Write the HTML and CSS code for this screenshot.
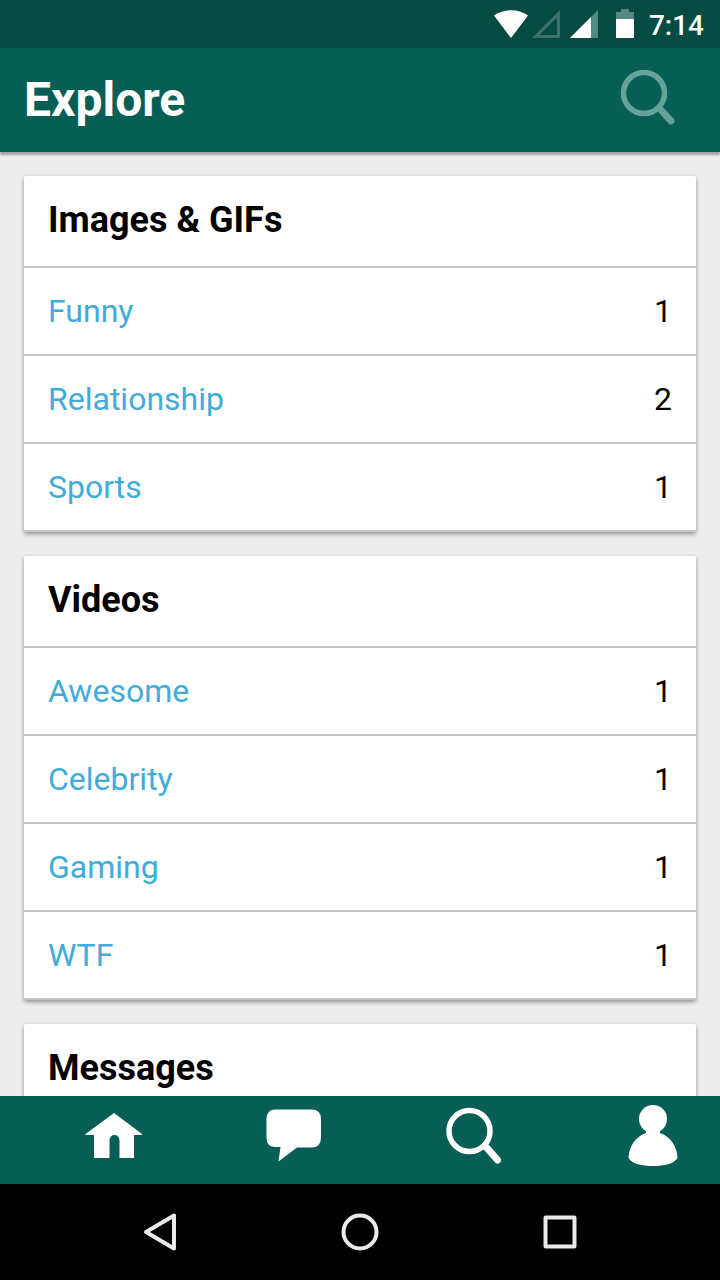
FILE: index.html
```html
<!DOCTYPE html>
<html lang="en">
<head>
<meta charset="utf-8">
<meta name="viewport" content="width=device-width, initial-scale=1">
<title>Explore</title>
<link rel="stylesheet" href="styles.css">
</head>
<body>
<div class="screen">
  <div class="status-bar">
    <svg class="status-icons" width="144" height="32" viewBox="0 0 144 32" aria-hidden="true">
      <path fill="#fff" d="M0 7.500C10 0.500 24 0.500 34 7.500L17 30Z"/>
      <path fill="#397269" fill-rule="evenodd" d="M66 2V30H38ZM63 9.500L45.500 27H63Z"/>
      <path fill="#558880" d="M104 2V30H76Z"/>
      <path fill="#fff" d="M97 9V30H76Z"/>
      <path fill="#558880" d="M122 4H127V1H135V4H140V11H122Z"/>
      <path fill="#fff" d="M122 11H140V30H122Z"/>
    </svg>
    <time class="clock">7:14</time>
  </div>

  <header class="app-bar">
    <h1 class="app-title">Explore</h1>
    <button class="icon-button search-button" type="button" aria-label="Search">
      <svg width="60" height="60" viewBox="0 0 60 60" fill="none" stroke="currentColor" aria-hidden="true">
        <circle cx="26" cy="23" r="20.500" stroke-width="5.500"/>
        <path stroke-width="5" d="M39.500 37L44 41.500"/>
        <path stroke-width="7" stroke-linecap="round" d="M44 41L53 51"/>
      </svg>
    </button>
  </header>

  <main class="content">
    <section class="card">
      <h2 class="card-title">Images &amp; GIFs</h2>
      <ul class="topics">
        <li><a class="topic" href="#funny"><span>Funny</span><span class="count">1</span></a></li>
        <li><a class="topic" href="#relationship"><span>Relationship</span><span class="count">2</span></a></li>
        <li><a class="topic" href="#sports"><span>Sports</span><span class="count">1</span></a></li>
      </ul>
    </section>
    <section class="card">
      <h2 class="card-title">Videos</h2>
      <ul class="topics">
        <li><a class="topic" href="#awesome"><span>Awesome</span><span class="count">1</span></a></li>
        <li><a class="topic" href="#celebrity"><span>Celebrity</span><span class="count">1</span></a></li>
        <li><a class="topic" href="#gaming"><span>Gaming</span><span class="count">1</span></a></li>
        <li><a class="topic" href="#wtf"><span>WTF</span><span class="count">1</span></a></li>
      </ul>
    </section>
    <section class="card">
      <h2 class="card-title">Messages</h2>
    </section>
  </main>

  <nav class="tab-bar" aria-label="Sections">
    <button class="icon-button tab" type="button" aria-label="Home">
      <svg width="64" height="64" viewBox="0 0 64 64" fill="currentColor" aria-hidden="true">
        <path d="M32 9L60 30V31H52V54H37.500V36.500Q37 31 32.500 31Q28 31 27.500 36.500V54H12V31H3.500V30Z"/>
      </svg>
    </button>
    <button class="icon-button tab" type="button" aria-label="Messages">
      <svg width="64" height="64" viewBox="0 0 64 64" fill="currentColor" aria-hidden="true">
        <path d="M13.500 5.500H49.500Q59 5.500 59 15V33.500Q59 43.500 49.500 43.500H35L16.500 57.500L18.500 43H13.500Q4.500 43 4.500 33.500V15Q4.500 5.500 13.500 5.500Z"/>
      </svg>
    </button>
    <button class="icon-button tab" type="button" aria-label="Explore" aria-current="page">
      <svg width="64" height="64" viewBox="0 0 64 64" fill="none" stroke="currentColor" aria-hidden="true">
        <circle cx="27.500" cy="27" r="20.500" stroke-width="5.500"/>
        <path stroke-width="5" d="M41 41L46 46"/>
        <path stroke-width="7" stroke-linecap="round" d="M45 44L55.500 56"/>
      </svg>
    </button>
    <button class="icon-button tab" type="button" aria-label="Profile">
      <svg width="64" height="64" viewBox="0 0 64 64" fill="currentColor" aria-hidden="true">
        <circle cx="31" cy="15" r="14"/>
        <path d="M24 26H38L38 29C48 32 55.500 43 55.500 54C52 60 42 62 31 62C20 62 10 60 6.500 54C6.500 43 14 32 24 29Z"/>
      </svg>
    </button>
  </nav>

  <nav class="system-bar" aria-label="System">
    <button class="icon-button system-key" type="button" aria-label="Back">
      <svg width="40" height="40" viewBox="0 0 40 40" fill="none" stroke="currentColor" stroke-width="4" stroke-linejoin="round" aria-hidden="true"><path d="M34 3.500V36.500L6 20Z"/></svg>
    </button>
    <button class="icon-button system-key" type="button" aria-label="Home">
      <svg width="40" height="40" viewBox="0 0 40 40" fill="none" stroke="currentColor" stroke-width="4" aria-hidden="true"><circle cx="20" cy="20" r="16.500"/></svg>
    </button>
    <button class="icon-button system-key" type="button" aria-label="Recent apps">
      <svg width="40" height="40" viewBox="0 0 40 40" fill="none" stroke="currentColor" stroke-width="4" stroke-linejoin="round" aria-hidden="true"><path d="M5.500 5.500H34.500V34.500H5.500Z"/></svg>
    </button>
  </nav>
</div>
</body>
</html>
```
FILE: styles.css
```css
* {
  box-sizing: border-box;
}

body {
  margin: 0;
  font-family: Roboto, "Liberation Sans", sans-serif;
  color: #000;
  background: #ededed;
}

.screen {
  display: flex;
  flex-direction: column;
  height: 100vh;
}

.status-bar {
  display: flex;
  flex: none;
  align-items: center;
  justify-content: flex-end;
  gap: 11px;
  height: 48px;
  padding-right: 16px;
  background: #054b42;
  color: #fff;
}

.clock {
  padding-top: 4px;
  font-size: 28px;
  font-weight: 500;
  line-height: 44px;
}

.app-bar {
  z-index: 1;
  display: flex;
  flex: none;
  align-items: center;
  justify-content: space-between;
  height: 104px;
  padding: 0 42px 0 24px;
  background: #075e54;
  color: #fff;
  box-shadow: 0 3px 2px rgba(0, 0, 0, 0.3);
}

.app-title {
  margin: 0;
  font-size: 48px;
  font-weight: 700;
  line-height: 56px;
}

.icon-button {
  display: flex;
  align-items: center;
  justify-content: center;
  margin: 0;
  padding: 0;
  border: 0;
  background: none;
  color: inherit;
}

.search-button {
  color: #65a29a;
}

.content {
  display: flex;
  flex: 1;
  flex-direction: column;
  gap: 24px;
  min-height: 0;
  padding: 24px;
  overflow-y: auto;
  scrollbar-width: none;
}

.card {
  flex: none;
  border-radius: 2px;
  background: #fff;
  box-shadow: 0 2px 4px rgba(0, 0, 0, 0.4);
}

.card-title {
  margin: 0;
  padding: 23px 24px 25px;
  border-bottom: 2px solid #c8c8c8;
  font-size: 36px;
  font-weight: 700;
  line-height: 42px;
}

.topics {
  margin: 0;
  padding: 0;
  list-style: none;
}

.topic {
  display: flex;
  align-items: center;
  justify-content: space-between;
  height: 88px;
  padding: 0 24px;
  border-bottom: 2px solid #c8c8c8;
  color: #41abda;
  font-size: 32px;
  line-height: 38px;
  text-decoration: none;
}

.count {
  color: #000;
}

.tab-bar {
  display: grid;
  flex: none;
  grid-template-columns: repeat(4, 1fr);
  height: 88px;
  background: #075e54;
  color: #fff;
}

.tab {
  padding: 0 0 8px 48px;
}

.system-bar {
  display: flex;
  flex: none;
  justify-content: center;
  height: 96px;
  background: #000;
  color: #ebebeb;
}

.system-key {
  width: 200px;
}
```
